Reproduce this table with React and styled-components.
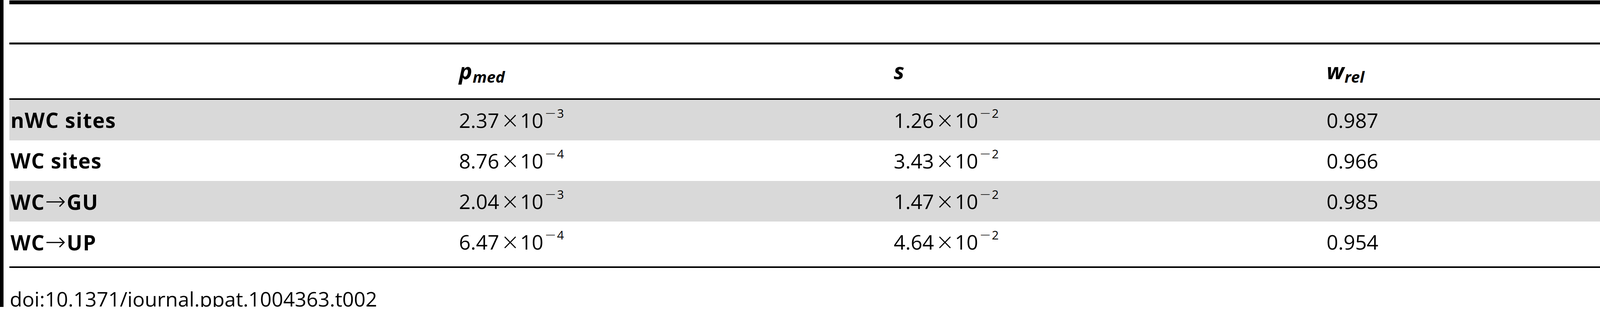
import React from 'react';
import styled, { createGlobalStyle } from 'styled-components';

const GlobalStyle = createGlobalStyle`
  html, body {
    margin: 0;
    padding: 0;
    background: #fff;
  }
  body {
    font-family: 'Open Sans', 'Liberation Sans', sans-serif;
    color: #000;
  }
`;

const Frame = styled.div`
  height: 787px;
  border-left: 9px solid #000;
  padding: 1px 0 0 15px;
  box-sizing: border-box;
`;

const TopRule = styled.div`
  height: 10px;
  background: #000;
`;

const Caption = styled.div`
  height: 98px;
`;

const Grid = styled.div`
  display: grid;
  grid-template-columns: 1148px 1113px 1108px 1fr;
`;

const HeaderRow = styled(Grid)`
  height: 138px;
  border-top: 5px solid #000;
  border-bottom: 4px solid #000;
  line-height: 134px;
  font-size: 57px;
  font-weight: 700;
  font-style: italic;
`;

const HeadCell = styled.div`
  padding-left: 3px;
  white-space: nowrap;
`;

const Sub = styled.span`
  font-size: 40px;
  position: relative;
  top: 9px;
  margin-left: 1px;
`;

const Body = styled.div`
  border-bottom: 4px solid #000;
`;

const Row = styled(Grid)`
  height: ${(p) => (p.$last ? 115 : 104)}px;
  background: ${(p) => (p.$shaded ? '#d9d9d9' : '#fff')};
  line-height: 104px;
  font-size: 52px;
`;

const Cell = styled.div`
  padding-left: 3px;
  white-space: nowrap;
  font-weight: ${(p) => (p.$label ? 700 : 400)};
  font-size: ${(p) => (p.$label ? 53 : 52)}px;
  letter-spacing: ${(p) => (p.$label ? 1.5 : 0)}px;
`;

const Arrow = styled.span`
  font-weight: 200;
  font-family: 'DejaVu Sans', sans-serif;
  font-size: 64px;
  letter-spacing: 0;
  margin: 0 2px 0 0;
`;

const Times = styled.span`
  font-family: 'DejaVu Sans', sans-serif;
  font-weight: 200;
  font-size: 58px;
  margin: 0 1px 0 4px;
`;

const Exp = styled.span`
  font-size: 31px;
  line-height: 1;
  vertical-align: 26px;
  margin-left: 3px;
`;

const Minus = styled.span`
  font-family: 'DejaVu Sans', sans-serif;
  font-weight: 200;
  font-size: 36px;
  margin-right: 2px;
`;

const Doi = styled.div`
  padding: 53px 0 0 1px;
  font-size: 52px;
  line-height: 52px;
  white-space: nowrap;
`;

const rows = [
  { label: 'nWC sites', p: ['2.37', '3'], s: ['1.26', '2'], w: '0.987' },
  { label: 'WC sites', p: ['8.76', '4'], s: ['3.43', '2'], w: '0.966' },
  { label: ['WC', 'GU'], p: ['2.04', '3'], s: ['1.47', '2'], w: '0.985' },
  { label: ['WC', 'UP'], p: ['6.47', '4'], s: ['4.64', '2'], w: '0.954' },
];

const Sci = ({ value }) => (
  <>
    {value[0]}
    <Times>×</Times>10
    <Exp>
      <Minus>−</Minus>
      {value[1]}
    </Exp>
  </>
);

const Label = ({ value }) =>
  Array.isArray(value) ? (
    <>
      {value[0]}
      <Arrow>→</Arrow>
      {value[1]}
    </>
  ) : (
    value
  );

export default function App() {
  return (
    <>
      <GlobalStyle />
      <Frame>
        <TopRule />
        <Caption />
        <HeaderRow>
          <HeadCell />
          <HeadCell>
            p<Sub>med</Sub>
          </HeadCell>
          <HeadCell>s</HeadCell>
          <HeadCell>
            w<Sub>rel</Sub>
          </HeadCell>
        </HeaderRow>
        <Body>
          {rows.map((r, i) => (
            <Row key={i} $shaded={i % 2 === 0} $last={i === rows.length - 1}>
              <Cell $label>
                <Label value={r.label} />
              </Cell>
              <Cell>
                <Sci value={r.p} />
              </Cell>
              <Cell>
                <Sci value={r.s} />
              </Cell>
              <Cell>{r.w}</Cell>
            </Row>
          ))}
        </Body>
        <Doi>doi:10.1371/journal.ppat.1004363.t002</Doi>
      </Frame>
    </>
  );
}
